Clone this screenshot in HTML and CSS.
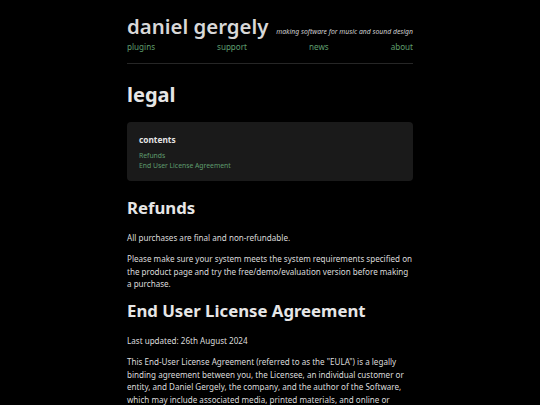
FILE: index.html
```html
<!DOCTYPE html>
<html>
<head>
<meta charset="utf-8">
<link rel="stylesheet" href="styles.css">
</head>
<body>
<div class="page">
  <header class="site-header">
    <div class="brand">
      <span class="brand-name">daniel gergely</span>
      <span class="tagline">making software for music and sound design</span>
    </div>
    <nav class="nav">
      <a href="#">plugins</a>
      <a href="#">support</a>
      <a href="#">news</a>
      <a href="#">about</a>
    </nav>
  </header>
  <main>
    <h1 class="title">legal</h1>
    <div class="toc">
      <div class="toc-title">contents</div>
      <a href="#refunds">Refunds</a>
      <a href="#eula">End User License Agreement</a>
    </div>
    <h2 id="refunds">Refunds</h2>
    <p>All purchases are final and non-refundable.</p>
    <p>Please make sure your system meets the system requirements specified on the product page and try the free/demo/evaluation version before making a&nbsp;purchase.</p>
    <h2 id="eula">End User License Agreement</h2>
    <p>Last updated: 26th August 2024</p>
    <p>This End-User License Agreement (referred to as the "EULA") is a legally binding agreement between you, the Licensee, an individual customer or entity, and Daniel Gergely, the company, and the author of the Software, which may include associated media, printed materials, and online or electronic documentation. This Agreement takes place in its entirety at the time of purchase.</p>
  </main>
</div>
</body>
</html>
```
FILE: styles.css
```css
html, body {
  margin: 0;
  padding: 0;
  background: #000;
}
body {
  font-family: "Noto Sans", sans-serif;
  color: #dcdcdc;
}
.page {
  width: 286px;
  margin: 0 auto;
}
.site-header {
  padding-top: 13px;
  border-bottom: 1px solid #262626;
  padding-bottom: 9px;
}
.brand {
  display: flex;
  align-items: baseline;
  justify-content: space-between;
  white-space: nowrap;
}
.brand-name {
  font-size: 20.4px;
  font-weight: 600;
  color: #d8d8d8;
  line-height: 26px;
}
.tagline {
  font-size: 6.85px;
  font-style: italic;
  color: #cfcfcf;
}
.nav {
  display: flex;
  justify-content: space-between;
  margin-top: 1px;
}
.nav a {
  color: #5f9e6e;
  text-decoration: none;
  font-size: 8.1px;
  line-height: 14px;
}
.title {
  font-size: 20px;
  font-weight: 700;
  color: #e6e6e6;
  margin: 16px 0 12px;
  line-height: 30px;
}
.toc {
  background: #1a1a1a;
  border-radius: 4px;
  padding: 11px 12px 10px;
  margin-bottom: 15px;
  display: flex;
  flex-direction: column;
}
.toc-title {
  font-size: 8.3px;
  font-weight: 700;
  color: #e6e6e6;
  margin-bottom: 4px;
  line-height: 14px;
}
.toc a {
  color: #5f9e6e;
  text-decoration: none;
  font-size: 6.8px;
  line-height: 10px;
}
h2 {
  font-size: 16.75px;
  font-weight: 700;
  color: #e6e6e6;
  margin: 3px 0 12px;
  line-height: 24px;
}
p {
  font-size: 8.08px;
  line-height: 12.5px;
  margin: 0 0 8.5px;
}
```
